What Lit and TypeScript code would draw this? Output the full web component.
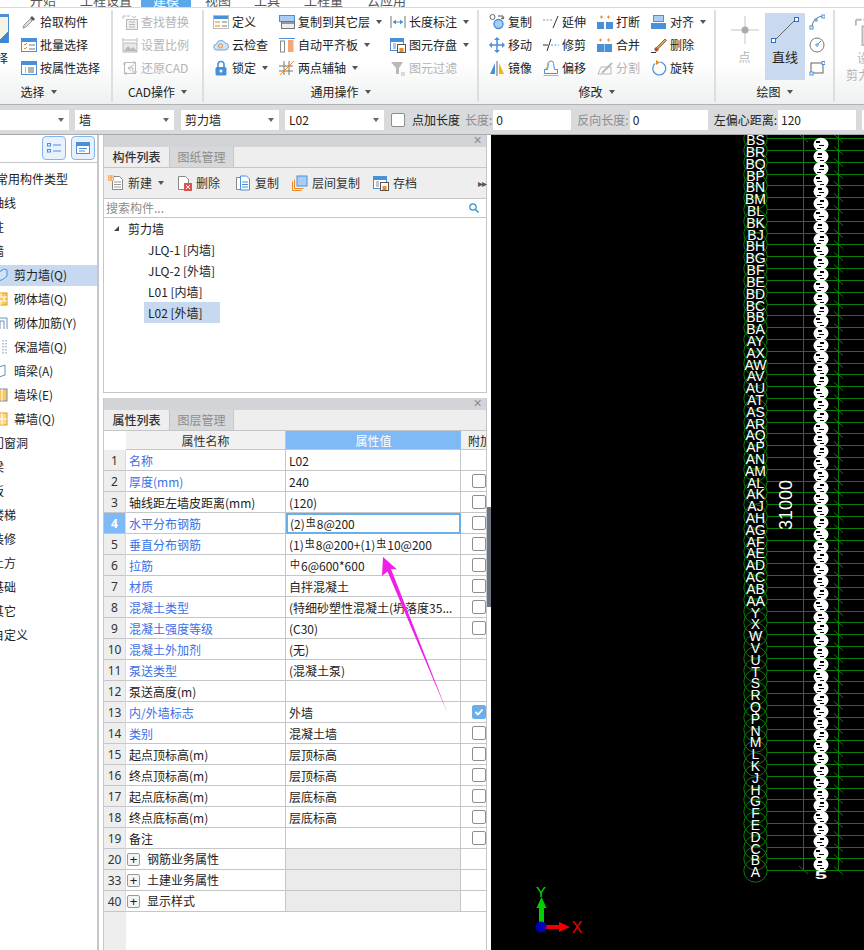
import { html, css, svg, LitElement } from "lit"
import { customElement } from "lit/decorators.js"

const B = "#4a90d9"
const LB = "#a9cdf5"
const O = "#f08a24"
const G = "#b9b9b9"

const ICONS: Record<string, unknown> = {
  pick: svg`<path d="M2 14l1-3 6-6 2 2-6 6z" fill="#ddd" stroke="#999"/><path d="M9 4l2-2 3 3-2 2z" fill="#555"/><path d="M2 14l2-1" stroke="${O}"/>`,
  batch: svg`<rect x=".5" y="1.5" width="15" height="13" fill="#fff" stroke="${B}"/><rect x="1" y="2" width="14" height="3" fill="${B}"/><path d="M3 7l1 1 2-2M3 11l1 1 2-2" stroke="${O}" fill="none"/><path d="M8 8h6M8 12h6" stroke="#777"/>`,
  attr: svg`<rect x=".5" y="1.5" width="15" height="13" fill="#fff" stroke="${B}"/><rect x="1" y="2" width="14" height="3" fill="${B}"/><path d="M4 8h1M4 10h1M4 12h1M7 8h6M7 10h6M7 12h6" stroke="#666"/>`,
  find: svg`<path d="M1 2h3M5 2h3M1 2v3M10 2l2 2 2-2" stroke="${G}" fill="none"/><rect x="4.500" y="5.500" width="11" height="10" fill="#eee" stroke="${G}"/><path d="M7 8h6M7 10.500h6M7 13h6" stroke="${G}"/>`,
  scale: svg`<path d="M1 3h14M1 1v4M15 1v4" stroke="${G}"/><rect x="1" y="6" width="14" height="9" fill="#e8e8e8" stroke="${G}"/><path d="M2 14l4-5 3 3 2-2 4 4z" fill="${G}"/>`,
  restore: svg`<rect x="2.500" y="2.500" width="11" height="11" fill="none" stroke="${G}"/><path d="M1 4h3M12 12h3M12 1v3M4 12v3" stroke="${G}"/><path d="M12 5l-6 3 3 3M6 8h5v5" fill="none" stroke="${G}"/>`,
  define: svg`<rect x=".5" y="1.500" width="15" height="13" fill="#fff" stroke="#bbb"/><rect x="1" y="2" width="14" height="3" fill="${B}"/><rect x="2" y="7" width="5" height="2" fill="#f6c277"/><rect x="2" y="11" width="5" height="2" fill="#f6c277"/><path d="M9 8h5M9 12h5" stroke="#777"/>`,
  cloud: svg`<path d="M4 13a3 3 0 0 1-.5-6 4.500 4.500 0 0 1 8.500-1 3.500 3.500 0 0 1 0 7z" fill="#cfe2f8" stroke="#6fa6e0"/><circle cx="7.500" cy="9" r="2" fill="none" stroke="${O}"/>`,
  lock: svg`<rect x="2.500" y="7" width="11" height="8.500" rx="1.500" fill="${B}"/><path d="M5 7V4.500a3 3 0 0 1 6 0V7" fill="none" stroke="${B}" stroke-width="1.600"/><circle cx="8" cy="11" r="1.500" fill="#fff"/>`,
  copylayer: svg`<rect x=".5" y="1.500" width="15" height="6" fill="${LB}" stroke="${B}"/><rect x="2.500" y="7.500" width="13" height="7" fill="#eee" stroke="#777"/><rect x="3" y="8" width="12" height="2" fill="#999"/>`,
  alignslab: svg`<path d="M0 1.500h16" stroke="${B}"/><rect x="1.500" y="4" width="4" height="11" fill="#fff" stroke="#888"/><rect x="9" y="3" width="5.500" height="12" fill="#f7a777"/>`,
  aux: svg`<path d="M0 6h14M0 11h14M5 1v14M10 1v14" stroke="#777"/><path d="M1 15L15 1" stroke="${O}"/>`,
  length: svg`<path d="M1 2v12M15 2v12" stroke="#777"/><path d="M3 8h10" stroke="${B}"/><path d="M3 8l3-2.500v5zM13 8l-3-2.500v5z" fill="${B}"/>`,
  store: svg`<rect x=".5" y="1.500" width="13" height="12" fill="#fff" stroke="${B}"/><rect x="1" y="2" width="12" height="3" fill="${B}"/><path d="M3 7h3M3 9h3M3 11h3" stroke="#888"/><rect x="7.500" y="7.500" width="8" height="8" fill="#fff" stroke="#555"/><rect x="9.500" y="11" width="4" height="4" fill="${O}"/>`,
  filter: svg`<path d="M1 2h12L9 8v6H6V8z" fill="${G}"/><path d="M11 13h4M11 15h4" stroke="${G}"/>`,
  copy: svg`<circle cx="3.500" cy="3" r="2.500" fill="none" stroke="#666"/><circle cx="9.500" cy="10" r="4.500" fill="${LB}" stroke="${B}" stroke-width="1.400"/><path d="M9 2h5v3M12 4l2 1 1-2" fill="none" stroke="#555"/>`,
  move: svg`<path d="M8 2v12M2 8h12" stroke="${B}" stroke-width="1.500"/><path d="M8 0l3 3H5zM8 16l3-3H5zM0 8l3-3v6zM16 8l-3-3v6z" fill="${B}"/>`,
  mirror: svg`<path d="M1 14l5-11v11z" fill="${B}"/><path d="M8 1v15" stroke="#666"/><path d="M10 3l5 11h-5z" fill="#f7b500"/>`,
  extend: svg`<path d="M0 6h9" stroke="#79a" stroke-dasharray="2 1.500"/><path d="M10 14l5-12" stroke="#333"/>`,
  trim: svg`<path d="M0 8h5" stroke="#333"/><path d="M8 8h8" stroke="${B}" stroke-dasharray="2 1.500"/><path d="M4 14l4-12" stroke="#333"/>`,
  offset: svg`<path d="M1.500 13.500v-4h3l1-6a2 2 0 0 1 5 0l1 6h3v4z" fill="none" stroke="${B}"/><path d="M.5 15.500h15M3 9V8h1l1-6" fill="none" stroke="#f0b020"/>`,
  break: svg`<path d="M3 3h3M10 3h3M4.500 1.500v3M11.500 1.500v3" stroke="${O}"/><rect x="0" y="8" width="7" height="7" fill="${B}"/><rect x="9" y="8" width="7" height="7" fill="${B}"/>`,
  merge: svg`<path d="M2 3h3M10 3h3M3.500 1.500v3M11.500 1.500v3" stroke="${O}"/><rect x="0" y="7" width="15" height="8" fill="${B}"/><path d="M7.500 7v8" stroke="${LB}"/>`,
  split: svg`<path d="M1 14h13M1 14l3-7h10v7" fill="none" stroke="${G}"/><path d="M5 13l8-8 2-2" stroke="${G}" stroke-width="2"/>`,
  align: svg`<rect x="2.500" y="1.500" width="10" height="6" fill="${LB}" stroke="${B}"/><rect x="0" y="9" width="15" height="6" fill="${B}"/>`,
  erase: svg`<path d="M5 11l9-9 1.500 1.500-9 9z" fill="#d8a35a" stroke="#8a6b3a"/><path d="M3 12l2-2 3 3-3 2z" fill="#b5532c"/><path d="M0 15.500h5" stroke="#333"/>`,
  rotate: svg`<path d="M9 2a6.500 6.500 0 1 1-5 1.500" fill="none" stroke="${B}" stroke-width="1.200"/><path d="M5 0l4 2.500L5 5z" fill="${O}"/>`,
  arc: svg`<path d="M3 14C3 7 7 3 14 2" fill="none" stroke="#666"/><rect x="1" y="12" width="3" height="3" fill="#fff" stroke="${B}"/><rect x="13" y="1" width="3" height="3" fill="#fff" stroke="${B}"/><rect x="6" y="5" width="2" height="2" fill="#fff" stroke="${B}"/>`,
  circle: svg`<circle cx="8" cy="8" r="7" fill="none" stroke="#777"/><circle cx="8" cy="8" r="1.200" fill="#fff" stroke="${B}"/><path d="M9 7l3-3" stroke="#777"/>`,
  rect: svg`<rect x="2" y="3" width="12" height="10" fill="none" stroke="#666"/><rect x="1" y="12" width="3" height="3" fill="#fff" stroke="${B}"/><rect x="13" y="1.500" width="3" height="3" fill="#fff" stroke="${B}"/>`,
  fresh: svg`<path d="M4.500 1.500h7l3 3v10h-10z" fill="#fff" stroke="#888"/><path d="M6 7h7M6 9.500h7M6 12h7" stroke="#999"/><rect x="0" y="0" width="6" height="6" fill="#f6b26b"/><path d="M1 1h1M4 1h1M1 4h1M4 4h1" stroke="#fff"/>`,
  remove: svg`<path d="M2.500 1.500h7l3 3v10h-10z" fill="#fff" stroke="#888"/><rect x="8" y="8" width="8" height="8" fill="#d9534f"/><path d="M10 10l4 4M14 10l-4 4" stroke="#fff"/>`,
  dup: svg`<path d="M1.500 2.500h8v12h-8z" fill="#fff" stroke="#888"/><path d="M5.500 1h6l3 3v11h-9z" fill="#fff" stroke="${B}"/><path d="M7 7h6M7 9.500h6M7 12h6" stroke="${B}"/>`,
  layercopy: svg`<path d="M.5 15.500v-9M.5 15.500h9M2.500 13.500v-9M2.500 13.500h9" stroke="${O}" fill="none"/><rect x="5" y="1" width="10" height="10" fill="${LB}" stroke="${B}"/>`,
  grid: svg`<rect x="1.500" y="3.500" width="3" height="2.500" fill="none" stroke="${B}"/><rect x="1.500" y="9.500" width="3" height="2.500" fill="none" stroke="${B}"/><path d="M7 5h8M7 11h8" stroke="${B}" stroke-width="1.200"/>`,
  win: svg`<rect x="1.500" y="2.500" width="13" height="11" fill="#fff" stroke="${B}"/><rect x="2" y="3" width="12" height="3" fill="${B}"/><path d="M4 8.500h8M4 11h6" stroke="${B}"/>`,
  wall: svg`<path d="M0 7l8-5 3 1v6c-3 3-6 5-11 5z" fill="#cfe2f8" stroke="${B}"/>`,
  brick: svg`<rect x="0" y="2" width="11" height="12" fill="#f9c860" stroke="#e69a10"/><path d="M0 6h11M0 10h11M5 2v4M8 6v4M5 10v4" stroke="#fff"/>`,
  rebar: svg`<path d="M1 14V3h10v11M4 14V6h4v8" fill="none" stroke="#6d8fb5"/>`,
  insul: svg`<path d="M3 1v14M7 1v14M10 1v14" stroke="#6d8fb5" stroke-dasharray="1.500 1.500"/>`,
  beam: svg`<path d="M0 5l9-3v10l-9 3z" fill="#fff" stroke="#6d8fb5"/>`,
  pier: svg`<rect x="0" y="2" width="11" height="12" fill="#f9c860" stroke="#6d8fb5"/><path d="M6 2v12" stroke="#fff"/>`,
  curtain: svg`<rect x="0" y="2" width="11" height="12" fill="#fbd88e" stroke="#e69a10"/><path d="M0 8h11M6 2v12" stroke="#fff"/>`,
}

const ic = (n: string) =>
  html`<svg class="ic" viewBox="0 0 16 16" width="16" height="16">${ICONS[n]}</svg>`

const caret = html`<i class="caret"></i>`

type RibbonItem = [string, string, boolean?, boolean?]

const SELECT_COL: RibbonItem[] = [
  ["pick", "拾取构件"],
  ["batch", "批量选择"],
  ["attr", "按属性选择"],
]
const CAD_COL: RibbonItem[] = [
  ["find", "查找替换", false, true],
  ["scale", "设置比例", false, true],
  ["restore", "还原CAD", false, true],
]
const GENERAL: RibbonItem[][] = [
  [["define", "定义"], ["cloud", "云检查"], ["lock", "锁定", true]],
  [["copylayer", "复制到其它层", true], ["alignslab", "自动平齐板", true], ["aux", "两点辅轴", true]],
  [["length", "长度标注", true], ["store", "图元存盘", true], ["filter", "图元过滤", false, true]],
]
const MODIFY: RibbonItem[][] = [
  [["copy", "复制"], ["move", "移动"], ["mirror", "镜像"]],
  [["extend", "延伸"], ["trim", "修剪"], ["offset", "偏移"]],
  [["break", "打断"], ["merge", "合并"], ["split", "分割", false, true]],
  [["align", "对齐", true], ["erase", "删除"], ["rotate", "旋转"]],
]

const item = ([icon, label, hasCaret, off]: RibbonItem) => html`
  <div class="item ${off ? "off" : ""}">${ic(icon)}<span>${label}</span>${hasCaret ? caret : ""}</div>
`
const col = (items: RibbonItem[]) => html`<div class="col">${items.map(item)}</div>`

const TREE: [string, string][] = [
  ["剪力墙(Q)", "wall"],
  ["砌体墙(Q)", "brick"],
  ["砌体加筋(Y)", "rebar"],
  ["保温墙(Q)", "insul"],
  ["暗梁(A)", "beam"],
  ["墙垛(E)", "pier"],
  ["幕墙(Q)", "curtain"],
]

// n, name, value, blue name, checkbox: 0 none, 1 empty, 2 ticked
type Row = [number, string, unknown, boolean, number]

const steel = (g: string) => html`<span class="steel">${g}</span>`

const ROWS: Row[] = [
  [1, "名称", "L02", true, 0],
  [2, "厚度(mm)", "240", true, 1],
  [3, "轴线距左墙皮距离(mm)", "(120)", false, 1],
  [4, "水平分布钢筋", html`(2)${steel("虫")}8@200`, true, 1],
  [5, "垂直分布钢筋", html`(1)${steel("虫")}8@200+(1)${steel("虫")}10@200`, true, 1],
  [6, "拉筋", html`${steel("中")}6@600*600`, true, 1],
  [7, "材质", "自拌混凝土", true, 1],
  [8, "混凝土类型", "(特细砂塑性混凝土(坍落度35...", true, 1],
  [9, "混凝土强度等级", "(C30)", true, 1],
  [10, "混凝土外加剂", "(无)", true, 0],
  [11, "泵送类型", "(混凝土泵)", true, 0],
  [12, "泵送高度(m)", "", false, 0],
  [13, "内/外墙标志", "外墙", true, 2],
  [14, "类别", "混凝土墙", true, 1],
  [15, "起点顶标高(m)", "层顶标高", false, 1],
  [16, "终点顶标高(m)", "层顶标高", false, 1],
  [17, "起点底标高(m)", "层底标高", false, 1],
  [18, "终点底标高(m)", "层底标高", false, 1],
  [19, "备注", "", false, 1],
]
const FOLDED: [number, string][] = [
  [20, "钢筋业务属性"],
  [33, "土建业务属性"],
  [40, "显示样式"],
]

const AXIS = [
  "BS", "BR", "BQ", "BP", "BN", "BM", "BL", "BK", "BJ", "BH", "BG", "BF", "BE", "BD", "BC", "BB", "BA",
  "AY", "AX", "AW", "AV", "AU", "AT", "AS", "AR", "AQ", "AP", "AN", "AM", "AL", "AK", "AJ", "AH", "AG", "AF", "AE", "AD", "AC", "AB", "AA",
  "Y", "X", "W", "V", "U", "T", "S", "R", "Q", "P", "N", "M", "L", "K", "J", "H", "G", "F", "E", "D", "C", "B", "A",
]
const PITCH = 732.1 / (AXIS.length - 1)

function cadDrawing() {
  const rows = AXIS.map((label, i) => ({ label, y: Math.round(138.2 + i * PITCH) + 0.5 }))
  return svg`
    <path class="crisp" d="M803.500 135V870M838.500 135V870" stroke="#0a7d0a"/>
    ${rows.map(
      (r) => svg`
        <line class="crisp" x1="767" x2="864" y1=${r.y} y2=${r.y} stroke="#0a7d0a"/>
        <line x1="834" x2="843" y1=${r.y - 4} y2=${r.y + 4} stroke="#0a7d0a"/>
        <circle cx="755.500" cy=${r.y} r="11.700" fill="none" stroke="#0a7d0a"/>
      `,
    )}
    <path d="M799 134l9 8M799 866l9 8" stroke="#0a7d0a"/>
    ${rows.map(
      (r, i) => svg`
        <text class="axis" x="755.500" y=${r.y + 6}>${r.label}</text>
        ${
          i < rows.length - 1
            ? svg`
              <ellipse cx="821" cy=${r.y + 6} rx="7.500" ry="6.800" fill="#fff"/>
              <rect class="crisp" x=${816 + (i % 3) * 2} y=${r.y + 2} width="4" height="2" fill="#000"/>
              <rect class="crisp" x=${819 - (i % 2) * 2} y=${r.y + 6} width="5" height="1" fill="#000"/>
              <rect class="crisp" x=${817 + (i % 2) * 3} y=${r.y + 9} width="4" height="1" fill="#000"/>
            `
            : ""
        }
      `,
    )}
    <text class="dim5" transform="translate(821 879) scale(1.700 .8)">5</text>
    <text class="dim" transform="translate(792 530) rotate(-90)">31000</text>

    <path d="M539 927V906h5V927z" fill="#00d000"/>
    <path d="M541.500 897l5 11h-10z" fill="#00d000"/>
    <text class="ax-y" x="541" y="897">Y</text>
    <path d="M541 925h19v4h-19z" fill="#f00000"/>
    <path d="M570 927l-11-5v10z" fill="#f00000"/>
    <circle cx="541" cy="927" r="5.500" fill="#0000b4"/>
    <text class="ax-x" x="577" y="933">X</text>
  `
}

@customElement("app-root")
export class AppRoot extends LitElement {
  static styles = css`
    :host {
      display: block;
      width: 864px;
      height: 950px;
      overflow: hidden;
      position: relative;
      background: #fff;
      color: #222;
      font: 12px/16px "Noto Sans CJK SC", "Noto Sans", sans-serif;
    }
    .ic { flex: none; display: block; }
    .caret {
      flex: none;
      width: 0;
      height: 0;
      margin-left: 6px;
      border: 3.5px solid transparent;
      border-top: 4px solid #555;
      border-bottom: 0;
    }

    /* tab strip, cut by the top of the picture */
    .tabs {
      height: 7px;
      overflow: hidden;
      display: flex;
      border-bottom: 1px solid #d9d9d9;
      color: #555;
      font-size: 13px;
    }
    .tab { height: 7px; line-height: 14px; }
    .tab span { display: block; margin-top: -7px; }
    .t0 { margin-left: 30px; width: 50px; }
    .t1 { width: 61px; }
    .t2 { width: 50px; background: #5aa7ea; color: #fff; text-align: center; margin-right: 14px; }
    .t3 { width: 49px; }
    .t4 { width: 50px; }
    .t5 { width: 63px; }

    .ribbon {
      height: 97px;
      display: flex;
      background: linear-gradient(#fff 0, #fff 55%, #eef0f1 100%);
      border-bottom: 1px solid #b0b2b5;
      box-sizing: border-box;
    }
    .group {
      flex: none;
      box-sizing: border-box;
      height: 92px;
      margin-top: 2px;
      border-right: 2px solid #dcdee0;
      display: flex;
      flex-direction: column;
    }
    .cols { height: 72px; display: flex; }
    .col { display: flex; flex-direction: column; }
    .item { height: 23px; display: flex; align-items: center; white-space: nowrap; }
    .item .ic { margin-right: 3px; }
    .off { color: #b4b4b4; }
    .glabel {
      height: 20px;
      display: flex;
      align-items: center;
      justify-content: center;
    }
    .g-select { width: 113px; }
    .g-select .glabel { padding-right: 34px; }
    .g-select .col { margin-left: 12px; }
    .clipbtn {
      width: 9px;
      height: 29px;
      margin-top: 4px;
      overflow: hidden;
      box-sizing: border-box;
      background: #f5f3e6;
      border-right: 1px solid #4a90d9;
      border-top: 3px solid #4a90d9;
    }
    .clipbtn i {
      display: block;
      height: 18px;
      margin-top: 9px;
      background: linear-gradient(135deg, #f5f3e6 50%, #3f86cf 50%);
    }
    .clipword { width: 9px; overflow: hidden; margin-top: 7px; }
    .clipword span { display: block; margin-left: -16px; white-space: nowrap; }
    .g-cad { width: 91px; }
    .g-cad .cols { padding-left: 9px; }
    .g-gen { width: 275px; }
    .g-gen .cols { padding-left: 9px; }
    .g-gen .col:nth-child(1) { width: 66px; }
    .g-gen .col:nth-child(2) { width: 111px; }
    .g-mod { width: 237px; }
    .g-mod .cols { padding-left: 10px; }
    .g-mod .col { width: 54px; }
    .g-draw { width: 119px; }
    .g-draw .cols { padding-left: 8px; }
    .big {
      width: 41px;
      height: 67px;
      margin-top: 3px;
      box-sizing: border-box;
      padding-top: 2px;
      display: flex;
      flex-direction: column;
      align-items: center;
      gap: 4px;
    }
    .big.on { background: #c9d9ef; width: 40px; font-size: 13px; }
    .big svg { flex: none; }
    .small { margin-left: 4px; display: flex; flex-direction: column; gap: 7px; padding-top: 4px; }
    .g-next { flex: 1; padding: 8px 0 0 11px; color: #b4b4b4; overflow: hidden; white-space: nowrap; }
    .g-next .ic { width: 30px; height: 30px; margin-left: 8px; }
    .g-next .w1 { margin: 4px 0 0 11px; }
    .g-next .w2 { margin-top: 1px; }

    .options {
      height: 30px;
      box-sizing: border-box;
      background: #d8dadc;
      border-bottom: 1px solid #a8aaad;
      display: flex;
      align-items: center;
      white-space: nowrap;
      overflow: hidden;
    }
    .sel {
      flex: none;
      height: 20px;
      box-sizing: border-box;
      background: #fff;
      padding-left: 4px;
      display: flex;
      align-items: center;
      justify-content: space-between;
    }
    .sel .caret { margin: 0 5px 0 0; border-top-color: #666; }
    .s0 { width: 69px; margin-right: 6px; }
    .s1 { width: 99px; margin-right: 7px; }
    .s2 { width: 98px; margin-right: 6px; }
    .s3 { width: 99px; margin-right: 7px; }
    .box {
      flex: none;
      width: 12px;
      height: 12px;
      border: 1px solid #8e8e8e;
      border-radius: 2px;
      background: #fff;
    }
    .opt-check { margin-right: 7px; }
    .faded { color: #8d8d8d; }
    .opt-len { margin: 0 1px 0 5px; }
    .inp {
      flex: none;
      width: 78px;
      height: 20px;
      box-sizing: border-box;
      background: #fff;
      padding-left: 3px;
      line-height: 20px;
    }
    .opt-rev { margin: 0 1px 0 6px; }
    .opt-off { margin: 0 1px 0 6px; }
    .i3 { margin-right: 6px; }

    .main { height: 815px; display: flex; }
    .side {
      flex: none;
      width: 98px;
      margin-right: 5px;
      box-sizing: border-box;
      border-right: 1px solid #c4c6ca;
      box-shadow: 1px 0 0 #c4c6ca;
    }
    .side-top {
      height: 28px;
      box-sizing: border-box;
      border-bottom: 1px solid #c4c6ca;
      display: flex;
      gap: 5px;
      padding: 1px 0 0 42px;
    }
    .side-btn {
      width: 24px;
      height: 24px;
      box-sizing: border-box;
      border: 1px solid #7fb6ee;
      border-radius: 4px;
      background: #e9f2fc;
      display: flex;
      align-items: center;
      justify-content: center;
    }
    .tree { padding-top: 4px; }
    .node { height: 24px; box-sizing: border-box; display: flex; align-items: center; white-space: nowrap; }
    .node > span { margin-left: -8px; }
    .node.root > span { margin-left: -4px; }
    .node.kid { padding: 1.5px 0; background-clip: content-box; }
    .node.kid > span { margin-left: 2px; }
    .node.kid .ic { margin-left: -4px; }
    .node.cur { background-color: #c7d9f0; }

    .panels { flex: none; width: 384px; display: flex; flex-direction: column; }
    .panel { border-right: 1px solid #c4c6ca; border-left: 1px solid #c4c6ca; box-sizing: border-box; display: flex; flex-direction: column; }
    .p1 { height: 258px; border-bottom: 1px solid #c4c6ca; margin-bottom: 5px; }
    .p2 { flex: 1; min-height: 0; }
    .ptitle {
      flex: none;
      height: 12px;
      background: #d2d4d8;
      color: #8a8c90;
      font: 11px/11px "Liberation Sans", sans-serif;
      text-align: right;
      padding-right: 4px;
    }
    .ptabs { flex: none; height: 21px; box-sizing: border-box; display: flex; background: #eeeeee; border-bottom: 1px solid #c4c6ca; }
    .ptab {
      width: 65px;
      text-align: center;
      line-height: 20px;
      font-weight: 500;
      color: #333;
    }
    .ptab.back { background: #d6d8da; color: #8d8d8d; border: solid #c4c6ca; border-width: 0 1px; box-sizing: border-box; font-weight: 400; }
    .ptools {
      flex: none;
      height: 31px;
      box-sizing: border-box;
      background: #eeeeee;
      border-bottom: 1px solid #c4c6ca;
      display: flex;
      align-items: center;
      padding-left: 4px;
      white-space: nowrap;
    }
    .ptools .ic { margin-right: 4px; }
    .tool { display: flex; align-items: center; color: #333; }
    .tool:nth-child(1) { width: 68px; }
    .tool:nth-child(2) { width: 59px; }
    .tool:nth-child(3) { width: 57px; }
    .tool:nth-child(4) { width: 81px; }
    .tool:nth-child(5) { width: 105px; }
    .more { color: #555; font: 10px "Liberation Sans", sans-serif; letter-spacing: -1px; }
    .search {
      flex: none;
      height: 19px;
      box-sizing: border-box;
      border-bottom: 1px solid #c4c6ca;
      display: flex;
      align-items: center;
      justify-content: space-between;
      color: #8d8d8d;
      padding: 0 7px 0 2px;
    }
    .list { flex: 1; }
    .li { height: 21px; line-height: 21px; padding-left: 44px; }
    .li.head { display: flex; align-items: center; padding-left: 10px; }
    .tri { width: 0; height: 0; margin-right: 9px; border-left: 5px solid transparent; border-bottom: 5px solid #444; }
    .li b { display: inline-block; font-weight: 400; width: 76px; box-sizing: border-box; padding-left: 4px; margin-left: -4px; }
    .li.cur b { background: #c7d9f0; }

    .grid {
      flex: 1;
      min-height: 0;
      display: grid;
      grid-template-columns: 22px 160px 175px 25px;
      grid-template-rows: 19px;
      grid-auto-rows: 21px;
      align-content: start;
      position: relative;
      overflow: hidden;
    }
    .grid > div { box-sizing: border-box; border-bottom: 1px solid #c4c6ca; line-height: 22px; white-space: nowrap; overflow: hidden; }
    .h0 { background: #fff; border-bottom: 0 !important; }
    .grid > .hn, .grid > .hv, .grid > .ha { line-height: 19px; }
    .hn { background: #f1f1f1; text-align: center; border-right: 1px solid #c4c6ca; color: #333; }
    .hv { background: #7fb9f6; color: #fff; text-align: center; }
    .ha { background: #f1f1f1; padding-left: 7px; }
    .num { background: #eeeeee; text-align: center; color: #333; border-right: 1px solid #dadada; font-family: "Noto Sans", sans-serif; }
    .num.act { background: #7fb9f6; color: #fff; font-weight: 700; }
    .name { padding-left: 3px; border-right: 1px solid #c4c6ca; }
    .name.blue { color: #3b6fe6; }
    .val { padding-left: 3px; border-right: 1px solid #c4c6ca; }
    .val.act { border: 2px solid #6aaeea; padding-left: 2px; line-height: 18px !important; }
    .fold { background: #ebebeb; }
    .steel { font-size: 10px; position: relative; top: -3px; padding: 0 1px; }
    .tick { display: flex; align-items: center; padding-left: 11px; }
    .tick .box.on { background: #6aaeea; border-color: #6aaeea; display: flex; align-items: center; justify-content: center; }
    .plus {
      flex: none;
      width: 11px;
      height: 11px;
      border: 1px solid #999;
      border-radius: 2px;
      background: #f4f4f4;
      margin: 0 7px 0 1px;
      display: flex;
      align-items: center;
      justify-content: center;
      font: 13px/11px "Liberation Sans", sans-serif;
    }
    .name.group-row { display: flex; align-items: center; padding-left: 0; }
    .rail {
      position: absolute;
      left: 0;
      top: 481px;
      bottom: 0;
      width: 22px;
      background: #eeeeee;
      border: 0 !important;
    }

    .strip { flex: none; width: 4px; padding-top: 372px; box-sizing: border-box; }
    .strip div { height: 100px; width: 4px; background: #6b7580; }
    .canvas { flex: 1; min-width: 0; background: #000; }
    .canvas svg { display: block; }
    .crisp { shape-rendering: crispEdges; }
    .axis { fill: #fff; font: 14px "Liberation Sans", sans-serif; text-anchor: middle; }
    .dim { fill: #fff; font: 18px "Liberation Sans", sans-serif; }
    .dim5 { fill: #fff; font: 700 13px "Liberation Sans", sans-serif; text-anchor: middle; }
    .ax-y { fill: #00e000; font: 15px "Liberation Sans", sans-serif; text-anchor: middle; }
    .ax-x { fill: #f00000; font: 16px "Liberation Sans", sans-serif; text-anchor: middle; }

    .arrow { position: absolute; left: 0; top: 0; pointer-events: none; }
  `

  private renderRibbon() {
    return html`
      <div class="ribbon">
        <div class="group g-select">
          <div class="cols">
            <div>
              <div class="clipbtn"><i></i></div>
              <div class="clipword"><span>选择</span></div>
            </div>
            ${col(SELECT_COL)}
          </div>
          <div class="glabel">选择${caret}</div>
        </div>
        <div class="group g-cad">
          <div class="cols">${col(CAD_COL)}</div>
          <div class="glabel">CAD操作${caret}</div>
        </div>
        <div class="group g-gen">
          <div class="cols">${GENERAL.map(col)}</div>
          <div class="glabel">通用操作${caret}</div>
        </div>
        <div class="group g-mod">
          <div class="cols">${MODIFY.map(col)}</div>
          <div class="glabel">修改${caret}</div>
        </div>
        <div class="group g-draw">
          <div class="cols">
            <div class="big off">
              <svg viewBox="0 0 30 30" width="30" height="30">
                <path d="M1 15h28M15 1v28" stroke="#c4c4c4"/>
                <circle cx="15" cy="15" r="3.500" fill="#aaa"/>
              </svg>
              <span>点</span>
            </div>
            <div class="big on">
              <svg viewBox="0 0 30 30" width="30" height="30">
                <path d="M4 26L26 4" stroke="#666"/>
                <rect x="1.500" y="23.500" width="4" height="4" fill="#fff" stroke="#2e6fc4"/>
                <rect x="24.500" y="2.500" width="4" height="4" fill="#fff" stroke="#2e6fc4"/>
              </svg>
              <span>直线</span>
            </div>
            <div class="small">${ic("arc")}${ic("circle")}${ic("rect")}</div>
          </div>
          <div class="glabel">绘图${caret}</div>
        </div>
        <div class="g-next">
          ${ic("find")}
          <div class="w1">设</div>
          <div class="w2">剪力</div>
        </div>
      </div>
    `
  }

  private renderOptionBar() {
    return html`
      <div class="options">
        <div class="sel s0"><span></span>${caret}</div>
        <div class="sel s1"><span>墙</span>${caret}</div>
        <div class="sel s2"><span>剪力墙</span>${caret}</div>
        <div class="sel s3"><span>L02</span>${caret}</div>
        <div class="box opt-check"></div>
        <span>点加长度</span>
        <span class="faded opt-len">长度:</span>
        <div class="inp">0</div>
        <span class="faded opt-rev">反向长度:</span>
        <div class="inp">0</div>
        <span class="opt-off">左偏心距离:</span>
        <div class="inp i3">120</div>
        <div class="inp"></div>
      </div>
    `
  }

  private renderSide() {
    return html`
      <div class="side">
        <div class="side-top">
          <div class="side-btn">${ic("grid")}</div>
          <div class="side-btn">${ic("win")}</div>
        </div>
        <div class="tree">
          <div class="node root"><span>常用构件类型</span></div>
          <div class="node"><span>轴线</span></div>
          <div class="node"><span>柱</span></div>
          <div class="node"><span>墙</span></div>
          ${TREE.map(
            ([t, i], n) => html`
              <div class="node kid ${n === 0 ? "cur" : ""}">${ic(i)}<span>${t}</span></div>
            `,
          )}
          ${["门窗洞", "梁", "板", "楼梯", "装修", "土方", "基础", "其它", "自定义"].map(
            (t) => html`<div class="node"><span>${t}</span></div>`,
          )}
        </div>
      </div>
    `
  }

  private renderList() {
    return html`
      <div class="panel p1">
        <div class="ptitle">✕</div>
        <div class="ptabs">
          <div class="ptab">构件列表</div>
          <div class="ptab back">图纸管理</div>
        </div>
        <div class="ptools">
          <div class="tool">${ic("fresh")}新建${caret}</div>
          <div class="tool">${ic("remove")}删除</div>
          <div class="tool">${ic("dup")}复制</div>
          <div class="tool">${ic("layercopy")}层间复制</div>
          <div class="tool">${ic("store")}存档</div>
          <span class="more">▸▸</span>
        </div>
        <div class="search">
          <span>搜索构件...</span>
          <svg viewBox="0 0 10 10" width="10" height="10">
            <circle cx="4" cy="4" r="3.200" fill="none" stroke="#2f8fd0" stroke-width="1.200"/>
            <path d="M6.500 6.500L9.500 9.500" stroke="#2f8fd0" stroke-width="1.400"/>
          </svg>
        </div>
        <div class="list">
          <div class="li head"><i class="tri"></i>剪力墙</div>
          <div class="li">JLQ-1 [内墙]</div>
          <div class="li">JLQ-2 [外墙]</div>
          <div class="li">L01 [内墙]</div>
          <div class="li cur"><b>L02 [外墙]</b></div>
        </div>
      </div>
    `
  }

  private renderProps() {
    return html`
      <div class="panel p2">
        <div class="ptitle">✕</div>
        <div class="ptabs">
          <div class="ptab">属性列表</div>
          <div class="ptab back">图层管理</div>
        </div>
        <div class="grid">
          <div class="h0"></div>
          <div class="hn">属性名称</div>
          <div class="hv">属性值</div>
          <div class="ha">附加</div>
          ${ROWS.map(
            ([n, name, value, blue, check]) => html`
              <div class="num ${n === 4 ? "act" : ""}">${n}</div>
              <div class="name ${blue ? "blue" : ""}">${name}</div>
              <div class="val ${n === 4 ? "act" : ""}">${value}</div>
              <div class="tick">
                ${check === 1 ? html`<i class="box"></i>` : ""}
                ${check === 2
                  ? html`<i class="box on">
                      <svg viewBox="0 0 10 10" width="10" height="10">
                        <path d="M1.500 5l2.500 2.500L8.500 2.500" fill="none" stroke="#fff" stroke-width="1.800"/>
                      </svg>
                    </i>`
                  : ""}
              </div>
            `,
          )}
          ${FOLDED.map(
            ([n, name]) => html`
              <div class="num">${n}</div>
              <div class="name group-row"><i class="plus">+</i>${name}</div>
              <div class="val fold"></div>
              <div></div>
            `,
          )}
          <div class="rail"></div>
        </div>
      </div>
    `
  }

  render() {
    return html`
      <div class="tabs">
        <div class="tab t0"><span>开始</span></div>
        <div class="tab t1"><span>工程设置</span></div>
        <div class="tab t2"><span>建模</span></div>
        <div class="tab t3"><span>视图</span></div>
        <div class="tab t4"><span>工具</span></div>
        <div class="tab t5"><span>工程量</span></div>
        <div class="tab"><span>云应用</span></div>
      </div>
      ${this.renderRibbon()} ${this.renderOptionBar()}
      <div class="main">
        ${this.renderSide()}
        <div class="panels">${this.renderList()} ${this.renderProps()}</div>
        <div class="strip"><div></div></div>
        <div class="canvas">
          <svg viewBox="491 135 373 815" width="373" height="815">${cadDrawing()}</svg>
        </div>
      </div>
      <svg class="arrow" width="864" height="950">
        <path d="M383 557L397 569.500L391 569L447.500 713L387.500 571.500L382 576z" fill="#f01ee6"/>
      </svg>
    `
  }
}

declare global {
  interface HTMLElementTagNameMap {
    "app-root": AppRoot
  }
}
